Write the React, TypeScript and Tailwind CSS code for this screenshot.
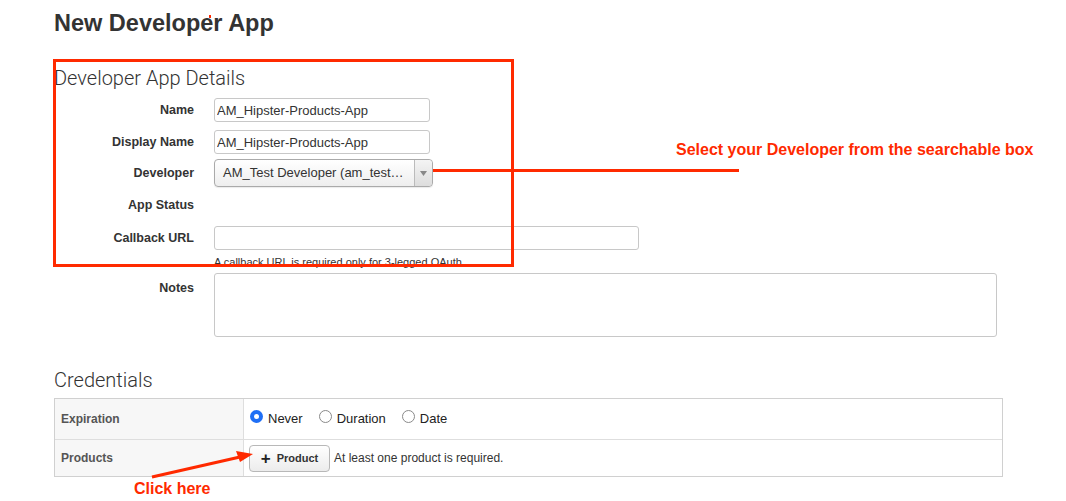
import { ReactNode } from "react";

type RowProps = {
  label: string;
  children?: ReactNode;
  className?: string;
};

const FormRow = ({ label, children, className }: RowProps): ReactNode => {
  return (
    <div className={"flex items-center " + (className ?? "")}>
      <label className="w-[140px] shrink-0 text-right text-[12.5px] font-bold leading-[16px] text-[#333]">{label}</label>
      <div className="ml-[20px] flex">{children}</div>
    </div>
  );
};

const Radio = ({ checked, label }: { checked?: boolean; label: string }): ReactNode => {
  return (
    <label className="flex items-center">
      {checked ? (
        <span className="-translate-y-[3px] flex h-[13px] w-[13px] items-center justify-center rounded-full bg-[#1f6ff5]">
          <span className="h-[5px] w-[5px] rounded-full bg-white"></span>
        </span>
      ) : (
        <span className="-translate-y-[3px] h-[13px] w-[13px] rounded-full border border-[#8a8a8a] bg-white"></span>
      )}
      <span className="ml-[5px] text-[13px] leading-[16px] text-[#222]">{label}</span>
    </label>
  );
};

export default function App() {
  const red = "#ff2a00";

  return (
    <div className="relative h-[501px] w-[1066px] overflow-hidden bg-white font-['Liberation_Sans',Arial,sans-serif] text-[#333]">
      <div className="pl-[54px] pt-[9px]">
        <h1 className="text-[23.5px] font-bold leading-[28px] text-[#333]">New Developer App</h1>

        {/* app details */}
        <h2 className="mt-[29px] font-['Roboto',sans-serif] text-[20px] font-light leading-[24px] text-[#333]">Developer App Details</h2>

        <FormRow label="Name" className="mt-[8px]">
          <input readOnly value="AM_Hipster-Products-App" className="h-[24px] w-[216px] rounded-[3px] border border-[#c8c8c8] px-[2px] text-[13px] text-[#333] outline-none" />
        </FormRow>
        <FormRow label="Display Name" className="mt-[8px]">
          <input readOnly value="AM_Hipster-Products-App" className="h-[24px] w-[216px] rounded-[3px] border border-[#c8c8c8] px-[2px] text-[13px] text-[#333] outline-none" />
        </FormRow>
        <FormRow label="Developer" className="mt-[5px]">
          <div className="flex h-[28px] w-[219px] items-center rounded-[4px] border border-[#aaa] bg-gradient-to-b from-white to-[#eee] shadow-[0_1px_1px_rgba(0,0,0,0.08)]">
            <span className="flex-1 pl-[8px] text-[13px] leading-[16px] text-[#333]">AM_Test Developer (am_test…</span>
            <span className="flex h-full w-[18px] items-center justify-center rounded-r-[4px] border-l border-[#bbb] bg-gradient-to-b from-[#f4f4f4] to-[#ddd]">
              <svg width="7" height="5" viewBox="0 0 7 5"><path d="M0 0h7L3.5 5z" fill="#888" /></svg>
            </span>
          </div>
        </FormRow>
        <FormRow label="App Status" className="mt-[4px] h-[28px]" />
        <FormRow label="Callback URL" className="mt-[7px]">
          <input readOnly className="h-[24px] w-[425px] rounded-[3px] border border-[#c8c8c8] px-[2px] text-[13px] outline-none" />
        </FormRow>
        <p className="ml-[160px] mt-[5px] text-[11px] leading-[14px] text-[#333]">A callback URL is required only for 3-legged OAuth.</p>

        <div className="mt-[4px] flex items-start">
          <label className="w-[140px] shrink-0 pt-[7px] text-right text-[12.5px] font-bold leading-[16px] text-[#333]">Notes</label>
          <textarea readOnly className="ml-[20px] block h-[64px] w-[783px] resize-none rounded-[3px] border border-[#c8c8c8] outline-none"></textarea>
        </div>

        {/* credentials */}
        <h2 className="mt-[31px] font-['Roboto',sans-serif] text-[20px] font-light leading-[24px] text-[#333]">Credentials</h2>
        <div className="mt-[6px] w-[949px] border border-[#d0d0d0]">
          <div className="flex h-[40px]">
            <div className="flex w-[189px] items-center border-r border-[#dedede] bg-[#f7f7f7] pl-[6px] text-[12px] font-bold text-[#555]">Expiration</div>
            <div className="flex items-center gap-[16px] pl-[6px]">
              <Radio checked label="Never" />
              <Radio label="Duration" />
              <Radio label="Date" />
            </div>
          </div>
          <div className="flex h-[37px] border-t border-[#dedede]">
            <div className="flex w-[189px] items-center border-r border-[#dedede] bg-[#f7f7f7] pl-[6px] text-[12px] font-bold text-[#555]">Products</div>
            <div className="flex items-center pl-[5px]">
              <button className="flex h-[27px] w-[81px] items-center justify-center rounded-[4px] border border-[#b8b8b8] bg-gradient-to-b from-white to-[#ececec] text-[11px] font-bold text-[#333]">
                <span className="mr-[6px] text-[17px] font-bold leading-[17px] text-[#222]">+</span>
                Product
              </button>
              <span className="ml-[4px] text-[12px] text-[#333]">At least one product is required.</span>
            </div>
          </div>
        </div>
      </div>

      {/* annotations */}
      <span className="absolute left-[209px] top-[15px] h-[3px] w-[2px] bg-[#ff2a00]"></span>
      <div className="absolute left-[53px] top-[59px] h-[208px] w-[461px] border-[3px] border-[#ff2a00]"></div>
      <div className="absolute left-[433px] top-[169px] h-[3px] w-[306px] bg-[#ff2a00]"></div>
      <p className="absolute left-[676px] top-[141px] whitespace-nowrap font-['Liberation_Sans_Narrow','Liberation_Sans',sans-serif] text-[16px] font-bold leading-[18px] text-[#ff2a00]">Select your Developer from the searchable box</p>
      <svg className="absolute left-0 top-0" width="1066" height="501">
        <line x1="152" y1="477" x2="240" y2="457" stroke={red} strokeWidth="3" />
        <path d="M253 454 L236 451 L240 462 Z" fill={red} />
      </svg>
      <p className="absolute left-[134px] top-[480px] text-[16px] font-bold leading-[18px] text-[#ff2a00]">Click here</p>
    </div>
  );
}
